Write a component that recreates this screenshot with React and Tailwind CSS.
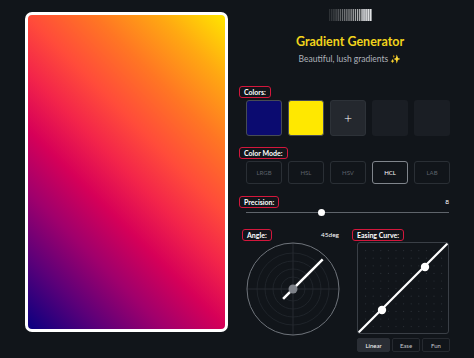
import React from "react";

function Label({ children, className = "" }) {
  return (
    <div
      className={
        "self-start h-[12px] px-[4px] flex items-center rounded-[3px] border-[1.5px] border-[#d3173c] text-[7px] font-bold text-white leading-none " +
        className
      }
    >
      {children}
    </div>
  );
}

function Barcode() {
  const bars = [];
  for (let i = 0; i < 20; i++) {
    const o = 0.12 + (i / 19) * 0.8;
    bars.push(
      <rect key={i} x={i * 2.15} y={0} width={1.3} height={12} fill="#ffffff" opacity={o} />
    );
  }
  return (
    <svg width="43" height="12" viewBox="0 0 43 12">
      {bars}
      <rect x="33" y="0" width="10" height="12" fill="#d8dade" opacity="0.55" />
    </svg>
  );
}

function AngleDial() {
  const c = 47;
  const a = Math.PI / 4;
  const dx = Math.cos(a);
  const dy = -Math.sin(a);
  return (
    <svg width="94" height="94" viewBox="0 0 94 94">
      {[12, 20, 28, 36].map((r) => (
        <circle key={r} cx={c} cy={c} r={r} fill="none" stroke="#1f242a" strokeWidth="1" />
      ))}
      <line x1={c} y1={1} x2={c} y2={93} stroke="#262b31" strokeWidth="1" />
      <line x1={1} y1={c} x2={93} y2={c} stroke="#262b31" strokeWidth="1" />
      <circle cx={c} cy={c} r={46} fill="none" stroke="#6f747b" strokeWidth="1" />
      <line
        x1={c - dx * 14}
        y1={c - dy * 14}
        x2={c + dx * 42}
        y2={c + dy * 42}
        stroke="#ffffff"
        strokeWidth="2.5"
      />
      <circle cx={c} cy={c} r={4.5} fill="#7d8188" />
    </svg>
  );
}

function EasingBox() {
  const dots = [];
  for (let i = 1; i < 12; i++) {
    for (let j = 1; j < 12; j++) {
      dots.push(<circle key={i + "-" + j} cx={i * 7.6} cy={j * 7.6} r={0.6} fill="#2c3138" />);
    }
  }
  return (
    <div className="w-[92px] h-[92px] rounded-[3px] border border-[#3a3f46] overflow-hidden">
      <svg width="90" height="90" viewBox="0 0 90 90">
        {dots}
        <line x1="0" y1="90" x2="90" y2="0" stroke="#ffffff" strokeWidth="2.2" />
        <circle cx="24" cy="67" r="4.2" fill="#ffffff" />
        <circle cx="67" cy="24" r="4.2" fill="#ffffff" />
      </svg>
    </div>
  );
}

export default function App() {
  const modes = ["LRGB", "HSL", "HSV", "HCL", "LAB"];
  return (
    <div className="w-[474px] h-[358px] bg-[#11151a] flex overflow-hidden font-['Lato','Open_Sans',sans-serif]">
      <div className="w-[232px] shrink-0 pl-[25px] pt-[12px]">
        <div className="w-[203px] h-[320px] rounded-[7px] border-[3px] border-white bg-[linear-gradient(45deg,#0a0080_0%,#5a0079_14%,#a0006c_27%,#d60058_39%,#f2244a_50%,#ff4b3a_61%,#ff7524_74%,#ffa812_87%,#ffe600_100%)]" />
      </div>
      <div className="flex-1 flex flex-col">
        <div className="w-[236px] flex flex-col items-center pt-[9px]">
          <Barcode />
          <div className="mt-[15px] text-[12.5px] leading-none font-bold text-[#f2d41c]">
            Gradient Generator
          </div>
          <div className="mt-[6px] text-[8.5px] leading-none text-[#aeb3ba]">
            Beautiful, lush gradients <span className="text-[#f5d90a]">✨</span>
          </div>
        </div>

        <Label className="ml-[7px] mt-[23px]">Colors:</Label>
        <div className="ml-[14px] mt-[2px] flex gap-[6px]">
          <div className="w-[36px] h-[36px] rounded-[3px] border-[1.5px] border-[#474c54] bg-[#0b0b70]" />
          <div className="w-[36px] h-[36px] rounded-[3px] border-[1.5px] border-[#474c54] bg-[#ffe800]" />
          <div className="w-[36px] h-[36px] rounded-[3px] border border-[#2d3238] bg-[#24282e] flex items-center justify-center text-white text-[14px] font-light leading-none">
            +
          </div>
          <div className="w-[36px] h-[36px] rounded-[3px] bg-[#1a1e24]" />
          <div className="w-[36px] h-[36px] rounded-[3px] bg-[#1a1e24]" />
        </div>

        <Label className="ml-[7px] mt-[11px]">Color Mode:</Label>
        <div className="ml-[14px] mt-[2px] flex gap-[6px]">
          {modes.map((m) => (
            <div
              key={m}
              className={
                m === "HCL"
                  ? "w-[36px] h-[23px] rounded-[3px] border border-[#80858c] flex items-center justify-center text-[6px] text-white"
                  : "w-[36px] h-[23px] rounded-[3px] border border-[#2a2f35] flex items-center justify-center text-[6px] text-[#5d626a]"
              }
            >
              {m}
            </div>
          ))}
        </div>

        <div className="mt-[12px] flex items-center w-[217px]">
          <Label className="ml-[7px]">Precision:</Label>
          <div className="ml-auto text-[6.5px] text-white leading-none">8</div>
        </div>
        <div className="ml-[14px] mt-[0px] w-[203px] h-[8px] relative flex items-center">
          <div className="w-full h-[1px] bg-[#5f646b]" />
          <div className="absolute left-[72px] top-[0.5px] w-[7px] h-[7px] rounded-full bg-white" />
        </div>

        <div className="mt-[13px] flex">
          <div className="ml-[10px] w-[97px] flex flex-col">
            <div className="flex items-center">
              <Label>Angle:</Label>
              <div className="ml-auto text-[6.5px] text-white leading-none">45deg</div>
            </div>
            <div className="mt-[1px] ml-[4px]">
              <AngleDial />
            </div>
          </div>
          <div className="ml-[13px] flex flex-col">
            <Label>Easing Curve:</Label>
            <div className="mt-[1px] ml-[5px]">
              <EasingBox />
            </div>
            <div className="mt-[4px] ml-[5px] flex gap-[2px]">
              <div className="w-[33px] h-[14px] rounded-[2px] bg-[#2a2e35] border border-[#2a2e35] flex items-center justify-center text-[6px] text-white">
                Linear
              </div>
              <div className="w-[28px] h-[14px] rounded-[2px] border border-[#262a30] flex items-center justify-center text-[6px] text-[#c4c8cd]">
                Ease
              </div>
              <div className="w-[28px] h-[14px] rounded-[2px] border border-[#262a30] flex items-center justify-center text-[6px] text-[#c4c8cd]">
                Fun
              </div>
            </div>
          </div>
        </div>
      </div>
    </div>
  );
}
